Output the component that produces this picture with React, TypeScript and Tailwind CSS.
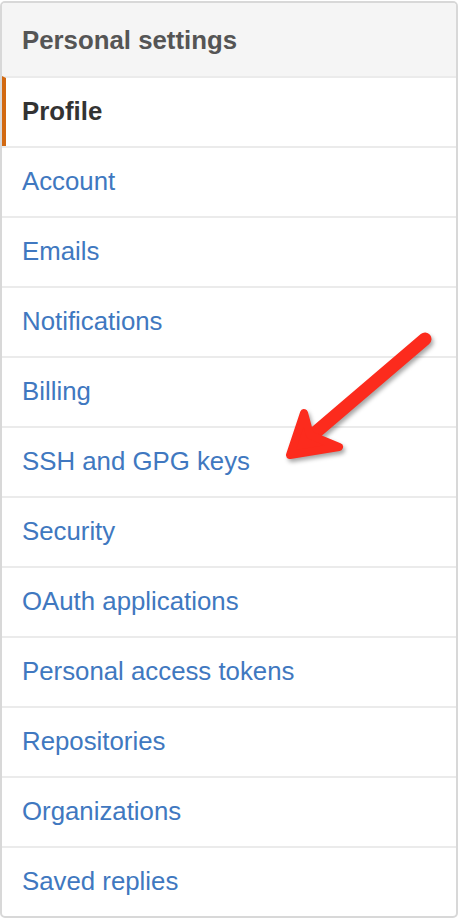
import React from "react";

const items = [
  "Account",
  "Emails",
  "Notifications",
  "Billing",
  "SSH and GPG keys",
  "Security",
  "OAuth applications",
  "Personal access tokens",
  "Repositories",
  "Organizations",
  "Saved replies",
];

export default function App() {
  return (
    <div
      className="relative w-[458px] h-[922px] bg-white pt-px"
      style={{ fontFamily: '"Liberation Sans", Arial, Helvetica, sans-serif' }}
    >
      <div className="w-[458px] border-2 border-[#d8d8d8] rounded-[5px] overflow-hidden bg-white">
        <div className="h-[73px] bg-[#f5f5f5] flex items-center pl-[20px] pt-[1px] text-[25.8px] font-bold text-[#555555]">
          Personal settings
        </div>
        <div className="h-[70px] border-t-2 border-[#ebebeb] flex items-center pl-[16px] pb-[2px] border-l-[4px] border-l-[#d26911] text-[25.8px] font-bold text-[#333333]">
          Profile
        </div>
        {items.map((t) => (
          <div
            key={t}
            className="h-[70px] border-t-2 border-[#ebebeb] flex items-center pl-[20px] pb-[2px] text-[25.8px] text-[#4078c0]"
          >
            {t}
          </div>
        ))}
      </div>
      <svg
        className="absolute left-0 top-0 pointer-events-none"
        width="458"
        height="922"
        viewBox="0 0 458 922"
        style={{ filter: "drop-shadow(2px 3px 2px rgba(0,0,0,0.35))" }}
      >
        <line
          x1="425"
          y1="339"
          x2="302"
          y2="444"
          stroke="#fc2b1d"
          strokeWidth="13"
          strokeLinecap="round"
        />
        <polygon
          points="290,455 304,413 310,435 339,447"
          fill="#fc2b1d"
          stroke="#fc2b1d"
          strokeWidth="8"
          strokeLinejoin="round"
        />
      </svg>
    </div>
  );
}
